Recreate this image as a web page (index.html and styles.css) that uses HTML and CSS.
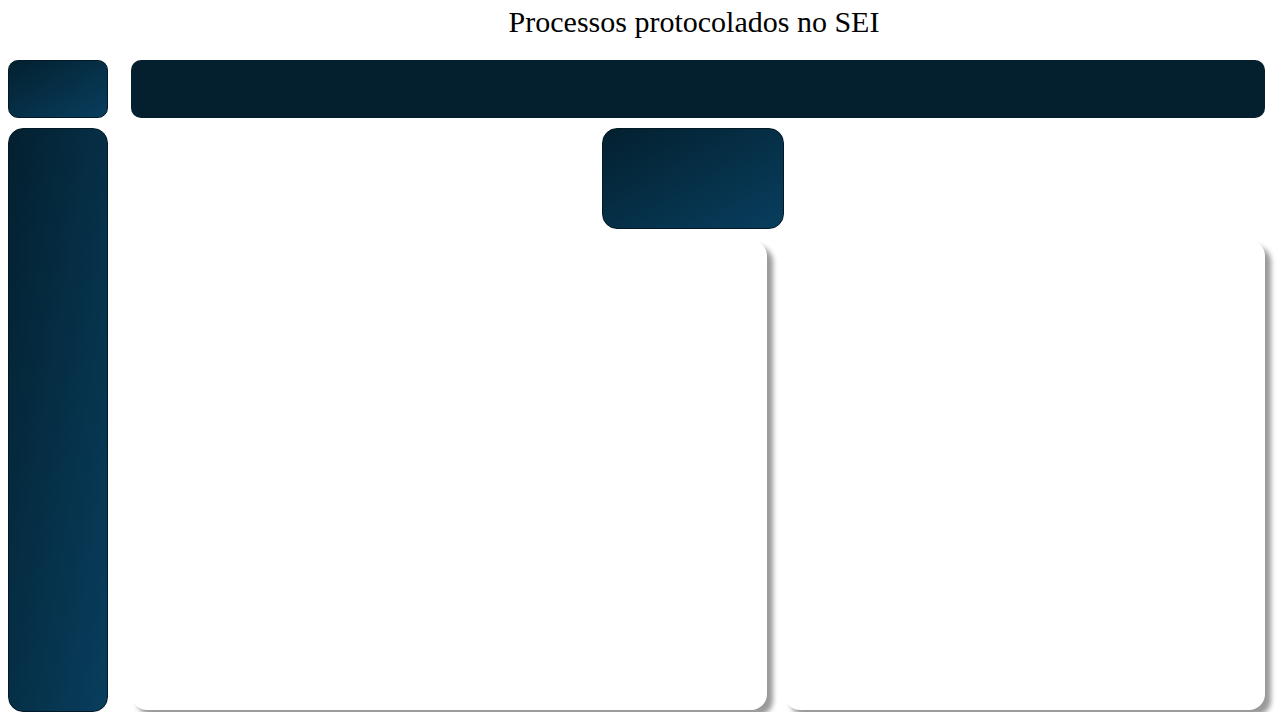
FILE: index.html
```html
<!DOCTYPE html>
<html>
<head>
  <title>Processos protocolados no SEI</title>
  <link rel="stylesheet" href="styles.css">
</head>
<body>
  <div class="layout">
    <div class="side">
      <div class="tile tile-small"></div>
      <div class="tile tile-tall"></div>
    </div>

    <div class="main">
      <h1 class="title">Processos protocolados no SEI</h1>
      <div class="topbar"></div>
      <div class="kpi-row">
        <div class="tile kpi"></div>
      </div>
      <div class="cards">
        <div class="card card-left"></div>
        <div class="card card-right"></div>
      </div>
    </div>
  </div>
</body>
</html>
```

FILE: styles.css
```css
body {
  margin: 0;
  background-color: #ffffff;
  font-family: "Liberation Serif", "Times New Roman", serif;
}

.layout {
  display: flex;
  gap: 23px;
  padding: 0 15px 0 8px;
}

.side {
  width: 101px;
  padding-top: 60px;
  display: flex;
  flex-direction: column;
  gap: 10px;
}

.tile {
  box-sizing: border-box;
  border: 1px solid #021a27;
  background: linear-gradient(to bottom right, #03202f, #083e5e);
}

.tile-small {
  height: 58px;
  border-radius: 10px;
}

.tile-tall {
  height: 584px;
  border-radius: 15px;
}

.main {
  flex: 1;
  display: flex;
  flex-direction: column;
}

.title {
  margin: 0;
  height: 60px;
  padding: 5px 8px 0 0;
  box-sizing: border-box;
  font-size: 30px;
  font-weight: normal;
  text-align: center;
  color: #000000;
}

.topbar {
  height: 58px;
  border-radius: 10px;
  background-color: #04202f;
}

.kpi-row {
  display: flex;
  padding: 10px 0 11px 471px;
}

.kpi {
  width: 182px;
  height: 101px;
  border-radius: 15px;
}

.cards {
  display: flex;
  gap: 17px;
}

.card {
  height: 470px;
  border-radius: 16px;
  background-color: #ffffff;
  box-shadow: 6px 6px 5px #9a9a9a;
}

.card-left {
  width: 636px;
}

.card-right {
  width: 481px;
}
```
